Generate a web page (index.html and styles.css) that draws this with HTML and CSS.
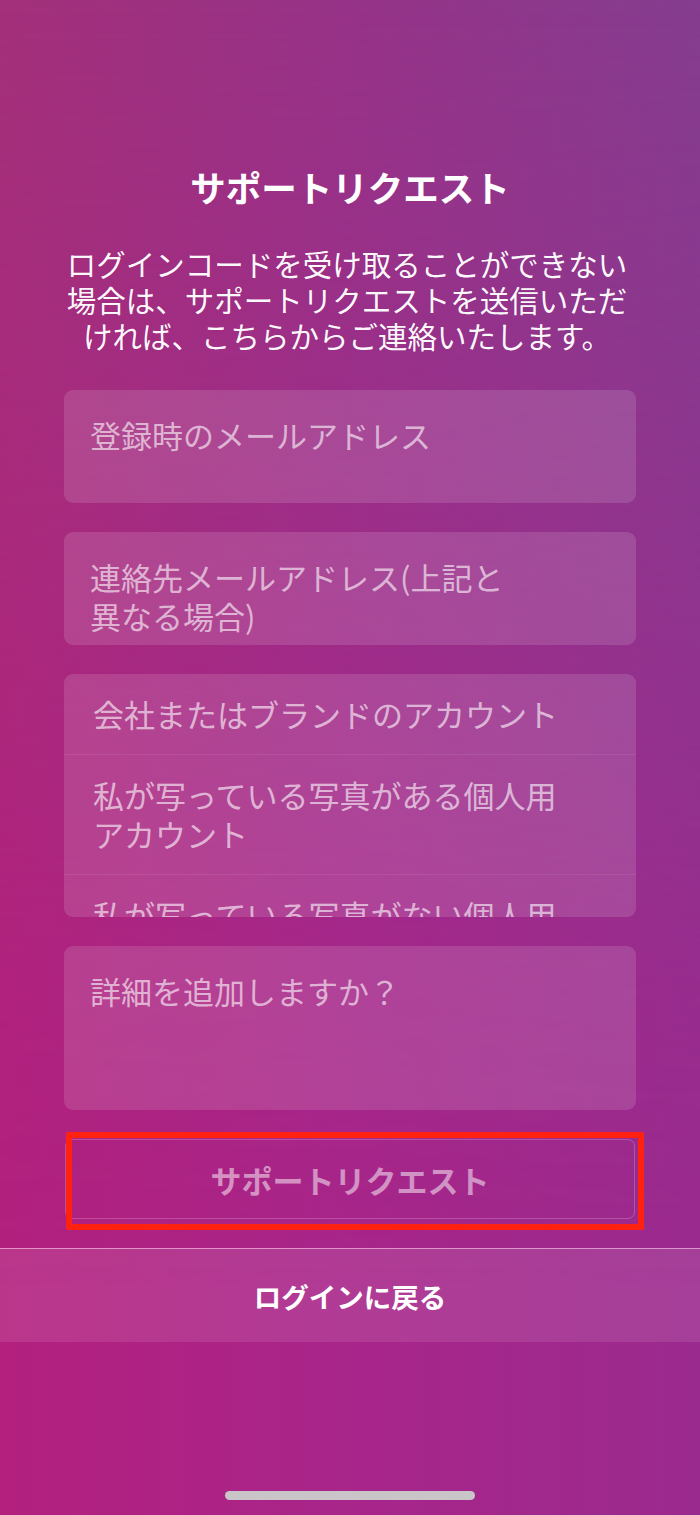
FILE: index.html
```html
<!DOCTYPE html>
<html lang="ja">
<head>
<meta charset="utf-8">
<title>サポートリクエスト</title>
<link rel="stylesheet" href="styles.css">
</head>
<body>
<div class="screen">
  <main class="content">
    <h1 class="title">サポートリクエスト</h1>
    <p class="lead">ログインコードを受け取ることができない<br>場合は、サポートリクエストを送信いただ<br>ければ、こちらからご連絡いたします。</p>
    <form class="form">
      <div class="field">登録時のメールアドレス</div>
      <div class="field">連絡先メールアドレス(上記と<br>異なる場合)</div>
      <div class="picker">
        <div class="option">会社またはブランドのアカウント</div>
        <div class="option">私が写っている写真がある個人用<br>アカウント</div>
        <div class="option">私が写っている写真がない個人用</div>
      </div>
      <div class="field field--area">詳細を追加しますか？</div>
      <div class="submit-wrap">
        <button type="button" class="submit">サポートリクエスト</button>
        <span class="highlight"></span>
      </div>
    </form>
  </main>
  <footer class="back-bar">ログインに戻る</footer>
  <div class="home-indicator"></div>
</div>
</body>
</html>
```

FILE: styles.css
```css
* {
  box-sizing: border-box;
}

html, body {
  margin: 0;
  padding: 0;
}

body {
  font-family: "Noto Sans CJK JP", "Noto Sans", sans-serif;
  color: #fff;
  background: #a3287f;
}

.screen {
  position: relative;
  min-height: 1515px;
  overflow: hidden;
  display: flex;
  flex-direction: column;
  background: linear-gradient(90deg, #b3207e 0%, #a8258a 50%, #9b2a8e 100%);
}

.screen::before {
  content: "";
  position: absolute;
  inset: 0;
  background: linear-gradient(90deg, #a3307a 0%, #963388 50%, #853d8f 100%);
  -webkit-mask-image: linear-gradient(180deg, #000 0%, rgba(0,0,0,0.6) 35%, rgba(0,0,0,0.15) 65%, transparent 85%);
  mask-image: linear-gradient(180deg, #000 0%, rgba(0,0,0,0.6) 35%, rgba(0,0,0,0.15) 65%, transparent 85%);
  pointer-events: none;
}

.content {
  position: relative;
  z-index: 1;
  padding: 165px 64px 0;
  display: flex;
  flex-direction: column;
}

.title {
  margin: 0;
  font-size: 35.5px;
  line-height: 44px;
  font-weight: 700;
  text-align: center;
  letter-spacing: 0;
}

.lead {
  margin: 36px -20px 0;
  padding-right: 6px;
  font-size: 29.5px;
  line-height: 36px;
  text-align: center;
  color: rgba(255, 255, 255, 0.97);
  white-space: nowrap;
}

.form {
  margin-top: 37px;
  display: flex;
  flex-direction: column;
  gap: 29px;
}

.field {
  height: 113px;
  padding: 25px 26px 0;
  border-radius: 9px;
  background: rgba(255, 255, 255, 0.13);
  color: rgba(255, 255, 255, 0.6);
  font-size: 31px;
  line-height: 39px;
  overflow: hidden;
}

.field--area {
  height: 164px;
}

.picker {
  height: 243px;
  border-radius: 9px;
  background: rgba(255, 255, 255, 0.13);
  overflow: hidden;
}

.option {
  padding: 20px 29px 21px;
  border-bottom: 1px solid rgba(255, 255, 255, 0.08);
  color: rgba(255, 255, 255, 0.62);
  font-size: 31px;
  line-height: 39px;
}

.submit-wrap {
  position: relative;
  margin: 0 1px;
}

.submit {
  display: flex;
  align-items: center;
  justify-content: center;
  width: 100%;
  height: 80px;
  margin: 0;
  padding: 0;
  border: 1px solid rgba(255, 255, 255, 0.2);
  border-radius: 7px;
  background: transparent;
  font-family: "Noto Sans CJK JP", "Noto Sans", sans-serif;
  font-size: 31px;
  font-weight: 700;
  color: rgba(255, 255, 255, 0.5);
}

.highlight {
  position: absolute;
  left: 1px;
  right: -9px;
  top: -7px;
  bottom: -11px;
  border: 6px solid #ff2211;
  border-radius: 2px;
  pointer-events: none;
}

.back-bar {
  position: relative;
  z-index: 1;
  margin-top: 29px;
  height: 94px;
  display: flex;
  align-items: center;
  justify-content: center;
  border-top: 1px solid rgba(255, 210, 240, 0.6);
  background: rgba(255, 255, 255, 0.1);
  font-size: 27.5px;
  font-weight: 700;
  color: #fff;
}

.home-indicator {
  position: relative;
  z-index: 1;
  align-self: center;
  width: 250px;
  height: 9px;
  margin-top: 149px;
  border-radius: 5px;
  background: #c9c5c9;
}
```
